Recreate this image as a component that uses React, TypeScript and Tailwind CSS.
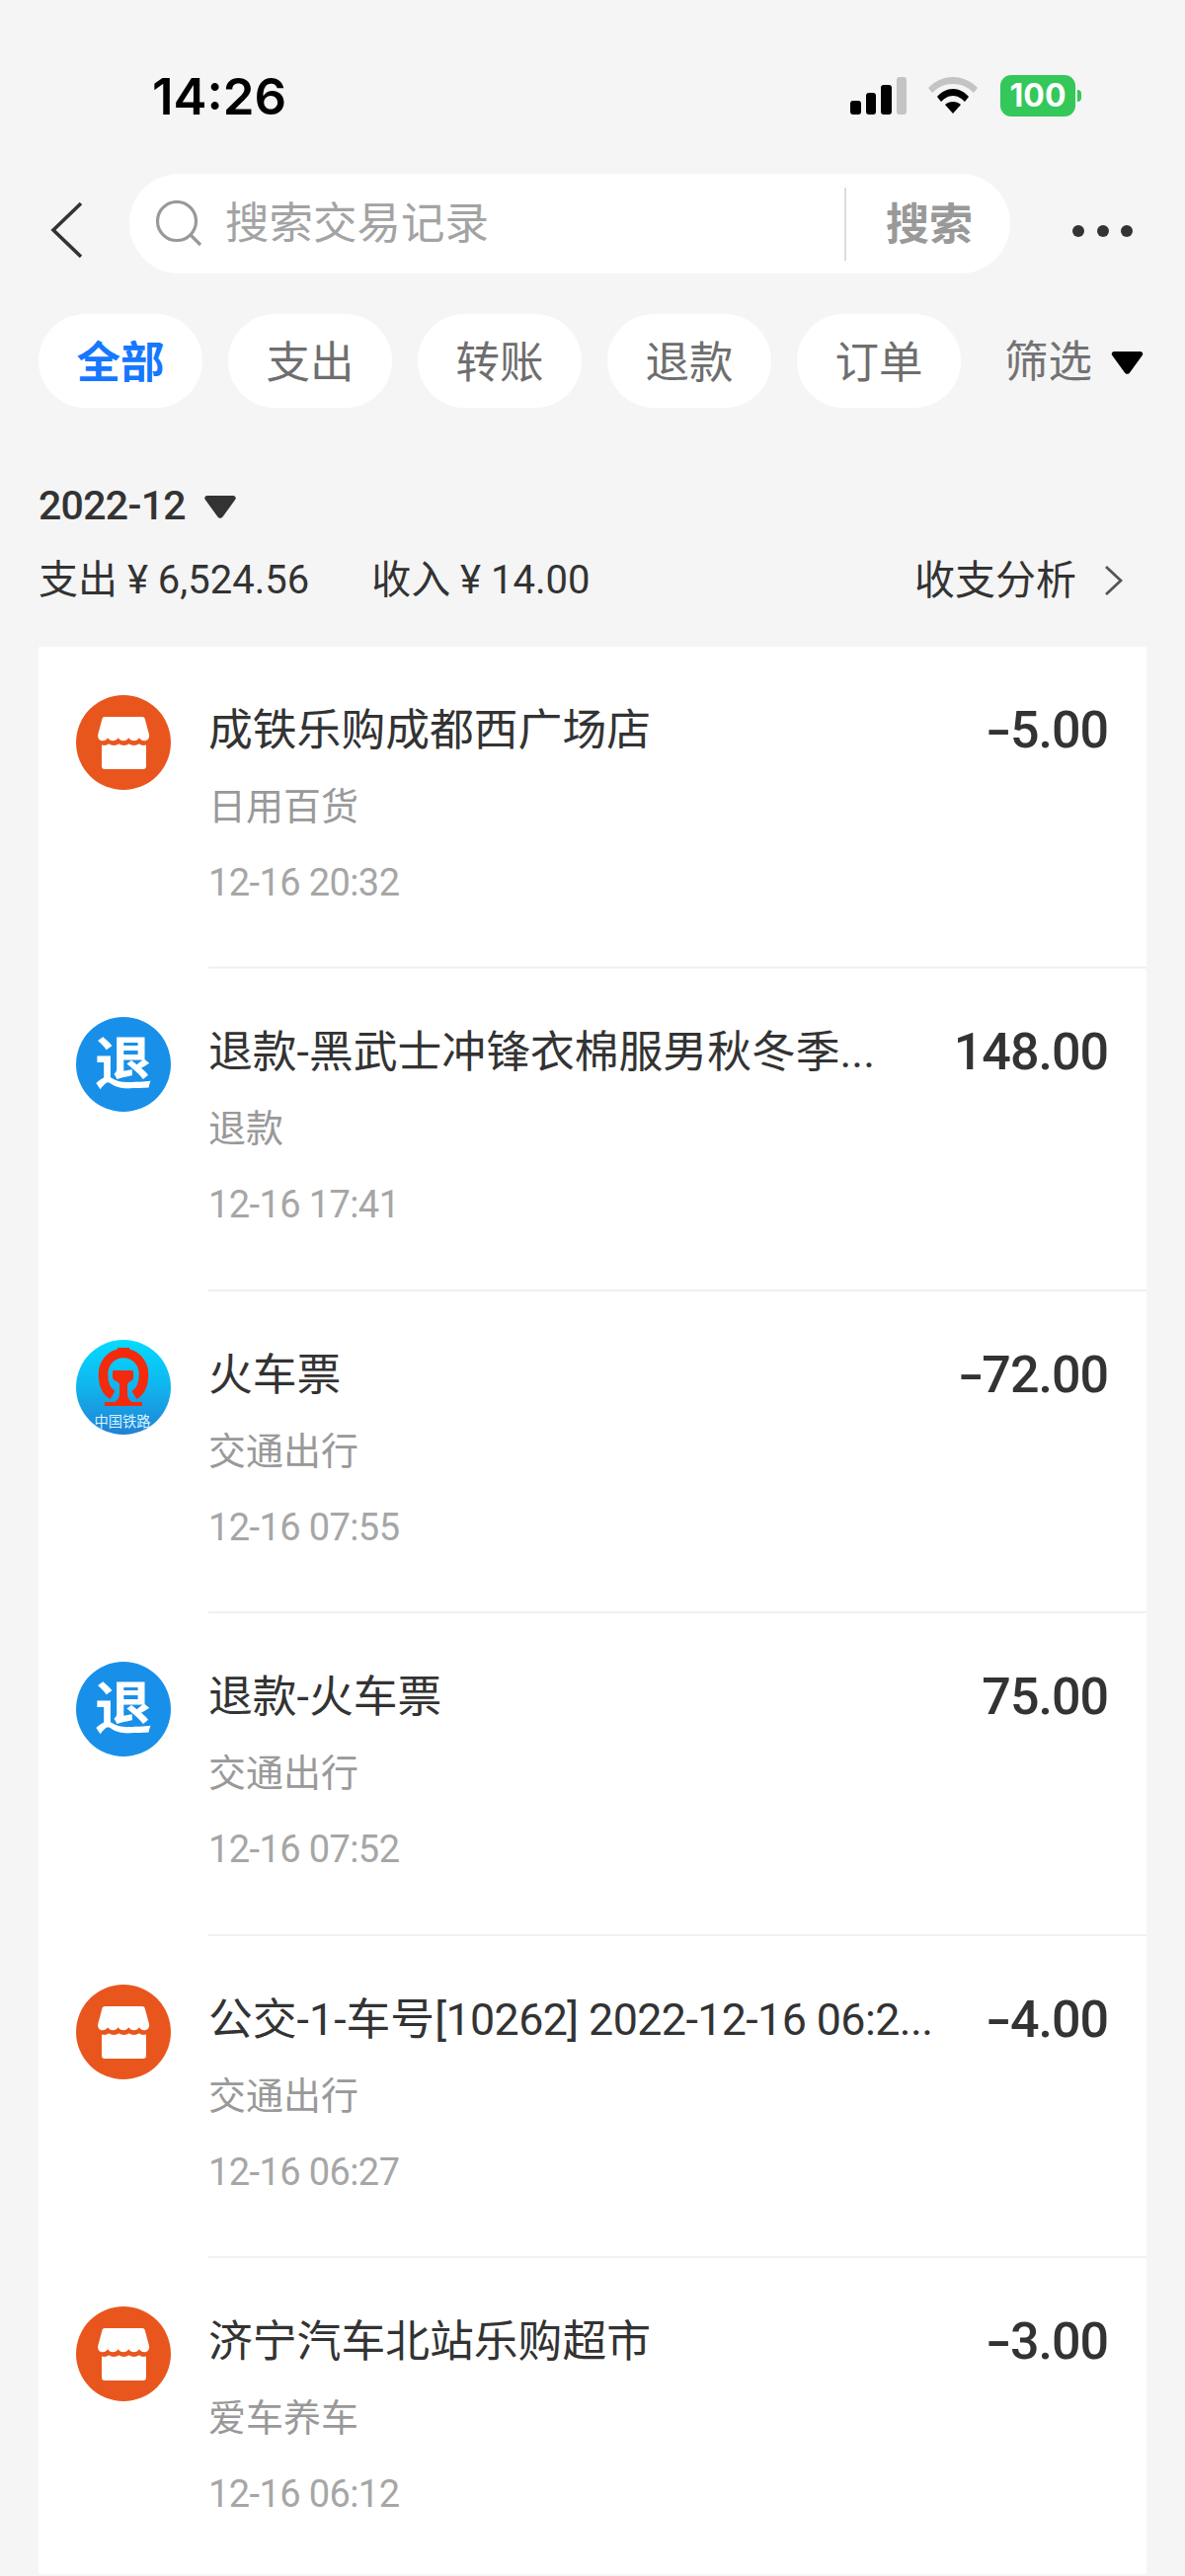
import type { ReactNode } from "react";

const FONT = "font-['Roboto','Noto_Sans_CJK_SC',sans-serif]";

type Txn = {
  icon: "store" | "refund" | "rail";
  title: ReactNode;
  sub: string;
  time: string;
  amount: string;
};

const txns: Txn[] = [
  { icon: "store", title: "成铁乐购成都西广场店", sub: "日用百货", time: "12-16 20:32", amount: "-5.00" },
  { icon: "refund", title: "退款-黑武士冲锋衣棉服男秋冬季...", sub: "退款", time: "12-16 17:41", amount: "148.00" },
  { icon: "rail", title: "火车票", sub: "交通出行", time: "12-16 07:55", amount: "-72.00" },
  { icon: "refund", title: "退款-火车票", sub: "交通出行", time: "12-16 07:52", amount: "75.00" },
  {
    icon: "store",
    title: (
      <>
        公交-1-车号<span className="tracking-[-0.6px]">[10262] 2022-12-16 06:2...</span>
      </>
    ),
    sub: "交通出行",
    time: "12-16 06:27",
    amount: "-4.00",
  },
  { icon: "store", title: "济宁汽车北站乐购超市", sub: "爱车养车", time: "12-16 06:12", amount: "-3.00" },
];

const tabs = ["全部", "支出", "转账", "退款", "订单"];

function Triangle({ className }: { className: string }) {
  return (
    <svg className={className} viewBox="0 0 32 23" fill="currentColor">
      <path d="M3 0h26c2.500 0 3.600 2.400 2 4.300L18.500 21.500c-1.300 1.800-3.700 1.800-5 0L1 4.300C-.6 2.400.5 0 3 0z" />
    </svg>
  );
}

function StoreIcon() {
  return (
    <svg className="w-[96px] h-[96px] shrink-0" viewBox="0 0 96 96">
      <circle cx="48" cy="48" r="48" fill="#e9561d" />
      <path
        fill="#fff"
        d="M29 22h38c1.500 0 2.400.8 2.800 2.200L74 40c.6 3.400-1.500 6.300-4.800 6.300-2.300 0-4-1-5.200-3-1.200 2-3 3-5.300 3s-4.300-1-5.400-3c-1.200 2-3 3-5.300 3s-4.200-1-5.300-3c-1.200 2-3.100 3-5.400 3s-4-1-5.200-3c-1.200 2-2.900 3-5.200 3-3.300 0-5.300-2.900-4.700-6.300l4.200-15.800c.4-1.400 1.300-2.200 2.800-2.200z"
      />
      <path
        fill="#fff"
        d="M26 50.500c2.500.8 5.500.3 7.200-1.300 2.800 2.300 7.500 2.300 10.200 0 2.800 2.300 7.400 2.300 10.200 0 2.800 2.300 7.400 2.300 10.200 0 1.700 1.600 4.600 2.100 7.200 1.300V72c0 1.800-1.200 3-3 3H29c-1.800 0-3-1.200-3-3z"
      />
    </svg>
  );
}

function RefundIcon() {
  return (
    <div className="w-[96px] h-[96px] shrink-0 rounded-full bg-[#1890e9] flex items-center justify-center text-white text-[58px] leading-none font-bold">
      退
    </div>
  );
}

function RailIcon() {
  return (
    <svg className="w-[96px] h-[96px] shrink-0" viewBox="0 0 96 96">
      <defs>
        <linearGradient id="rail" x1="0" y1="0" x2="0" y2="1">
          <stop offset="0" stopColor="#04dbff" />
          <stop offset="0.5" stopColor="#10b4ee" />
          <stop offset="1" stopColor="#2181d4" />
        </linearGradient>
      </defs>
      <circle cx="48" cy="48" r="48" fill="url(#rail)" />
      <path fill="none" stroke="#f32a0c" strokeWidth="9.500" d="M37 56C30 52 27.500 44 27.500 35 27.500 23 36 13.500 48 13.500S68.500 23 68.500 35c0 9-2.500 17-9.500 21" />
      <rect x="42" y="8" width="12" height="6" fill="#f32a0c" />
      <path
        fill="#f32a0c"
        d="M39 31h17c1.500 0 2 .6 2 2v5c0 2-1 3-3 4-2 1-3 2-3 4v8c0 4 1 7 5 9h10v4H29v-4h10c4-2 5-5 5-9v-8c0-2-1-3-3-4-2-1-4-2-4-4v-5c0-1.400.5-2 2-2z"
      />
      <text x="47" y="88" textAnchor="middle" fill="#d8f3ff" fontSize="14.250" fontFamily="'Noto Sans CJK SC',sans-serif">
        中国铁路
      </text>
    </svg>
  );
}

function Amount({ value }: { value: string }) {
  const negative = value.startsWith("-");
  return (
    <div className="text-[52px] leading-[50px] font-medium tracking-[-1px] text-[#333] whitespace-nowrap">
      {negative && <span className="inline-block ml-[5px] origin-right scale-x-[1.45]">-</span>}
      {negative ? value.slice(1) : value}
    </div>
  );
}

function Row({ txn }: { txn: Txn }) {
  return (
    <div className="flex h-[326.400px]">
      <div className="ml-[38px] mr-[38px] pt-[49px] shrink-0">
        {txn.icon === "store" && <StoreIcon />}
        {txn.icon === "refund" && <RefundIcon />}
        {txn.icon === "rail" && <RailIcon />}
      </div>
      <div className="flex-1 min-w-0 border-b-2 border-[#f0f0f0] pr-[39px] pt-[60px]">
        <div className="flex justify-between items-center h-[50px]">
          <div className="text-[44.800px] leading-[50px] text-[#333] whitespace-nowrap">{txn.title}</div>
          <Amount value={txn.amount} />
        </div>
        <div className="mt-[27px] text-[38px] leading-[50px] text-[#999]">{txn.sub}</div>
        <div className="mt-[27px] text-[38px] leading-[50px] tracking-[-0.6px] text-[#a6a6a6]">{txn.time}</div>
      </div>
    </div>
  );
}

export default function App() {
  return (
    <div className={`${FONT} w-[1200px] h-[2609px] overflow-hidden bg-[#f5f5f5]`}>
      {/* status bar */}
      <div className="h-[176px] pt-[76px]">
        <div className="h-[42px] flex items-center justify-between pl-[154px] pr-[105px]">
          <div className="font-['Inter',sans-serif] text-[51px] leading-none font-semibold text-black">14:26</div>
          <div className="flex items-center">
            <div className="flex items-end gap-[5px] h-[38px]">
              <div className="w-[11px] h-[14px] rounded-[3px] bg-black" />
              <div className="w-[10px] h-[22px] rounded-[3px] bg-black" />
              <div className="w-[11px] h-[30px] rounded-[3px] bg-black" />
              <div className="w-[10px] h-[38px] rounded-[3px] bg-[#c4c4c4]" />
            </div>
            <svg className="ml-[22px] w-[50px] h-[38px]" viewBox="0 0 50 38">
              <path fill="#c4c4c4" d="M0 11C7 4 15 0 25 0s18 4 25 11l-4 5C40 10 33 7 25 7S10 10 4 16z" />
              <path fill="#000" d="M9 20c4-5 10-8 16-8s12 3 16 8l-4 5c-3-3-7-6-12-6s-9 3-12 6z" />
              <path fill="#000" d="M17 28c2-2 5-3 8-3s6 1 8 3l-8 9z" />
            </svg>
            <div className="ml-[23px] w-[76px] h-[42px] rounded-[11px] bg-[#34c759] flex items-center justify-center font-['Inter',sans-serif] text-white text-[32px] leading-none font-bold">
              100
            </div>
            <div className="ml-[2px] w-[4px] h-[12px] rounded-r-full bg-[#34c759]" />
          </div>
        </div>
      </div>

      {/* search */}
      <div className="h-[101px] flex items-center pl-[51px]">
        <svg className="w-[33px] h-[58px] shrink-0 mt-[12px]" viewBox="0 0 33 58" fill="none" stroke="#333" strokeWidth="3.600">
          <path d="M31 2 3 29l28 27" />
        </svg>
        <div className="ml-[47px] w-[892px] h-[101px] rounded-full bg-white flex items-center pl-[27px]">
          <svg className="w-[47px] h-[47px] shrink-0" viewBox="0 0 47 47" fill="none" stroke="#999" strokeWidth="3.200">
            <circle cx="21" cy="21" r="19.500" />
            <path d="m35 35 10 10" />
          </svg>
          <div className="ml-[23px] pt-[2px] text-[44.500px] leading-none text-[#a3a3a3]">搜索交易记录</div>
          <div className="ml-auto w-[2px] h-[74px] bg-[#dcdcdc]" />
          <div className="ml-[40px] mr-[38px] pt-[2px] text-[44px] leading-none font-bold text-[#999]">搜索</div>
        </div>
        <div className="ml-[63px] flex gap-[12.500px] mt-[14px]">
          <div className="w-[12px] h-[12px] rounded-full bg-[#333]" />
          <div className="w-[12px] h-[12px] rounded-full bg-[#333]" />
          <div className="w-[12px] h-[12px] rounded-full bg-[#333]" />
        </div>
      </div>

      {/* tabs */}
      <div className="mt-[41px] h-[95px] flex items-center pl-[39px] gap-[26px]">
        {tabs.map((t, i) => (
          <div
            key={t}
            className={`w-[166px] h-[95px] pt-[5px] rounded-full bg-white flex items-center justify-center text-[44.500px] leading-none ${
              i === 0 ? "font-bold text-[#1677ff]" : "text-[#6e6e6e]"
            }`}
          >
            {t}
          </div>
        ))}
        <div className="ml-[18px] pt-[3px] text-[44.500px] leading-none text-[#737373]">筛选</div>
        <Triangle className="ml-[-7px] mt-[4px] w-[33px] h-[23px] text-black" />
      </div>

      {/* month and totals */}
      <div className="mt-[79px] h-[40px] flex items-center pl-[39px] text-[#333]">
        <span className="text-[41px] leading-none font-medium tracking-[-0.7px]">2022-12</span>
        <Triangle className="ml-[19px] w-[32px] h-[23px] text-[#333] mt-[3px]" />
      </div>
      <div className="mt-[36px] h-[40px] flex items-center pl-[39px] text-[40px] leading-none text-[#333]">
        <span>支出 ¥ 6,524.56</span>
        <span className="ml-[63px]">收入 ¥ 14.00</span>
        <span className="ml-auto text-[41px]">收支分析</span>
        <svg className="ml-[28px] mr-[62px] w-[20px] h-[32px]" viewBox="0 0 20 32" fill="none" stroke="#555" strokeWidth="2.800">
          <path d="m2 2 15 14L2 30" />
        </svg>
      </div>

      {/* list */}
      <div className="mt-[47px] mx-[39px] h-[1952px] overflow-hidden bg-white">
        {txns.map((t) => (
          <Row key={t.time} txn={t} />
        ))}
      </div>
    </div>
  );
}
